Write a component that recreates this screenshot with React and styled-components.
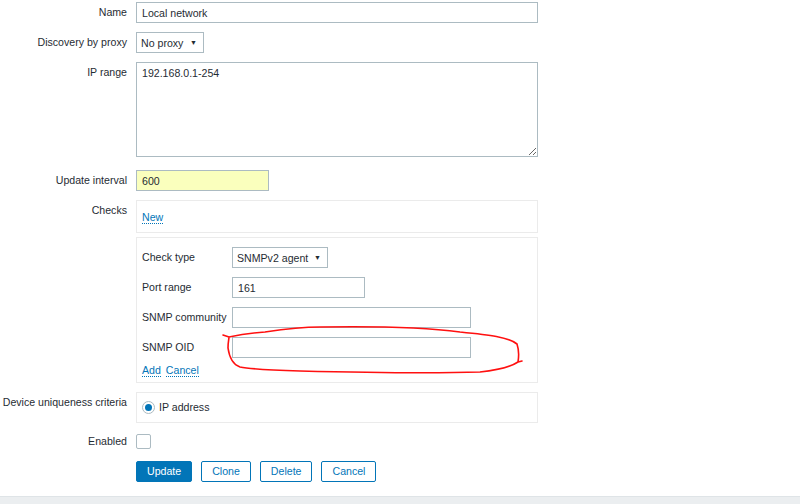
import React from "react";
import styled, { createGlobalStyle } from "styled-components";

const GlobalStyle = createGlobalStyle`
  html, body { margin: 0; padding: 0; background: #ffffff; }
  body {
    font-family: Arial, "Liberation Sans", sans-serif;
    font-size: 10.6px;
    color: #1f2c33;
  }
  * { box-sizing: border-box; }
`;

const Page = styled.div`
  position: relative;
  height: 100vh;
  display: flex;
  flex-direction: column;
  overflow: hidden;
`;

const Main = styled.main`
  flex: 1;
  padding-top: 2px;
`;

const FormList = styled.ul`
  list-style: none;
  margin: 0;
  padding: 0;
`;

const Row = styled.li`
  display: grid;
  grid-template-columns: 127px 402px;
  column-gap: 9px;
  margin-bottom: ${(p) => p.$gap ?? 9}px;
`;

const Label = styled.label`
  text-align: right;
  line-height: 21px;
  white-space: nowrap;
`;

const Field = styled.div`
  display: flex;
  flex-direction: column;
  gap: 4px;
  align-items: flex-start;
`;

const TextInput = styled.input`
  width: ${(p) => p.$w || 402}px;
  height: 21px;
  border: 1px solid #acbbc2;
  border-radius: 0;
  padding: 0 5px;
  font: inherit;
  color: #1f2c33;
  background: ${(p) => (p.$autofill ? "#faffbd" : "#ffffff")};
  outline: none;
`;

const TextArea = styled.textarea`
  display: block;
  width: 402px;
  height: 95px;
  border: 1px solid #acbbc2;
  padding: 4px 5px;
  font: inherit;
  line-height: 13px;
  color: #1f2c33;
  outline: none;
  resize: both;
`;

const Dropdown = styled.div`
  display: inline-flex;
  align-items: center;
  justify-content: space-between;
  width: ${(p) => p.$w}px;
  height: 21px;
  border: 1px solid #acbbc2;
  padding: 0 6px 0 4px;
  background: #ffffff;
`;

const Caret = styled.span`
  font-size: 7px;
  color: #1f2c33;
`;

const Box = styled.div`
  width: 402px;
  border: 1px solid #ebebeb;
  padding: ${(p) => p.$pad};
`;

const LinkText = styled.a`
  color: #0275b8;
  text-decoration: none;
  border-bottom: 1px dotted #0275b8;
  line-height: 12px;
  cursor: pointer;
`;

const LinkLine = styled.div`
  display: flex;
  gap: 5px;
  height: 14px;
  align-items: center;
`;

const SubGrid = styled.div`
  display: grid;
  grid-template-columns: 90px auto;
  row-gap: 9px;
  align-items: center;
  justify-items: start;
  margin-bottom: 5px;
`;

const SubLabel = styled.span`
  white-space: nowrap;
  line-height: 21px;
`;

const Choice = styled.div`
  display: flex;
  align-items: center;
  gap: 4px;
  height: 14px;
`;

const Radio = styled.span`
  width: 13px;
  height: 13px;
  border: 1px solid #acbbc2;
  border-radius: 50%;
  display: inline-flex;
  align-items: center;
  justify-content: center;
  &::after {
    content: "";
    width: 7px;
    height: 7px;
    border-radius: 50%;
    background: #0275b8;
  }
`;

const CheckboxCell = styled.div`
  height: 21px;
  display: flex;
  align-items: center;
`;

const Checkbox = styled.span`
  width: 15px;
  height: 15px;
  border: 1px solid #acbbc2;
  border-radius: 2px;
  background: #ffffff;
`;

const Buttons = styled.div`
  display: flex;
  gap: 9px;
`;

const Button = styled.button`
  height: 21px;
  padding: 0 10px;
  border: 1px solid #0275b8;
  border-radius: 2px;
  font: inherit;
  line-height: 19px;
  background: ${(p) => (p.$primary ? "#0275b8" : "#ffffff")};
  color: ${(p) => (p.$primary ? "#ffffff" : "#0275b8")};
  cursor: pointer;
`;

const Footer = styled.footer`
  height: 8px;
  background: #ebeef0;
  border-top: 1px solid #dfe4e7;
`;

const Scribble = styled.svg`
  position: absolute;
  left: 0;
  top: 0;
  pointer-events: none;
`;

export default function App() {
  return (
    <Page>
      <GlobalStyle />
      <Main>
        <FormList>
          <Row>
            <Label>Name</Label>
            <Field>
              <TextInput defaultValue="Local network" />
            </Field>
          </Row>
          <Row>
            <Label>Discovery by proxy</Label>
            <Field>
              <Dropdown $w={68}>
                No proxy <Caret>▼</Caret>
              </Dropdown>
            </Field>
          </Row>
          <Row $gap={13}>
            <Label>IP range</Label>
            <Field>
              <TextArea defaultValue="192.168.0.1-254" />
            </Field>
          </Row>
          <Row>
            <Label>Update interval</Label>
            <Field>
              <TextInput $w={133} $autofill defaultValue="600" />
            </Field>
          </Row>
          <Row>
            <Label>Checks</Label>
            <Field>
              <Box $pad="9px 5px 8px">
                <LinkLine>
                  <LinkText>New</LinkText>
                </LinkLine>
              </Box>
              <Box $pad="9px 5px 5px">
                <SubGrid>
                  <SubLabel>Check type</SubLabel>
                  <Dropdown $w={96}>
                    SNMPv2 agent <Caret>▼</Caret>
                  </Dropdown>
                  <SubLabel>Port range</SubLabel>
                  <TextInput $w={133} defaultValue="161" />
                  <SubLabel>SNMP community</SubLabel>
                  <TextInput $w={239} />
                  <SubLabel>SNMP OID</SubLabel>
                  <TextInput $w={239} />
                </SubGrid>
                <LinkLine>
                  <LinkText>Add</LinkText>
                  <LinkText>Cancel</LinkText>
                </LinkLine>
              </Box>
            </Field>
          </Row>
          <Row $gap={8}>
            <Label>Device uniqueness criteria</Label>
            <Field>
              <Box $pad="7px 5px 8px">
                <Choice>
                  <Radio />
                  IP address
                </Choice>
              </Box>
            </Field>
          </Row>
          <Row $gap={9}>
            <Label>Enabled</Label>
            <CheckboxCell>
              <Checkbox />
            </CheckboxCell>
          </Row>
          <Row>
            <span />
            <Buttons>
              <Button $primary>Update</Button>
              <Button>Clone</Button>
              <Button>Delete</Button>
              <Button>Cancel</Button>
            </Buttons>
          </Row>
        </FormList>
      </Main>
      <Footer />
      <Scribble width="800" height="504" viewBox="0 0 800 504">
        <path
          d="M223,335 L229,337 C238,335 250,333 265,332 C285,329 300,327 320,327 C380,326 430,328 460,332 C490,335 508,337 517,344 C519,350 519,356 518,362 L522,361 M518,362 C512,366 500,370 480,372 C420,374 340,372 300,371 C270,370 250,369 240,367 C231,364 229,355 228,348 C228,342 229,339 229,337"
          fill="none"
          stroke="#ff1010"
          strokeWidth="1.6"
          strokeLinecap="round"
          strokeLinejoin="round"
        />
      </Scribble>
    </Page>
  );
}
